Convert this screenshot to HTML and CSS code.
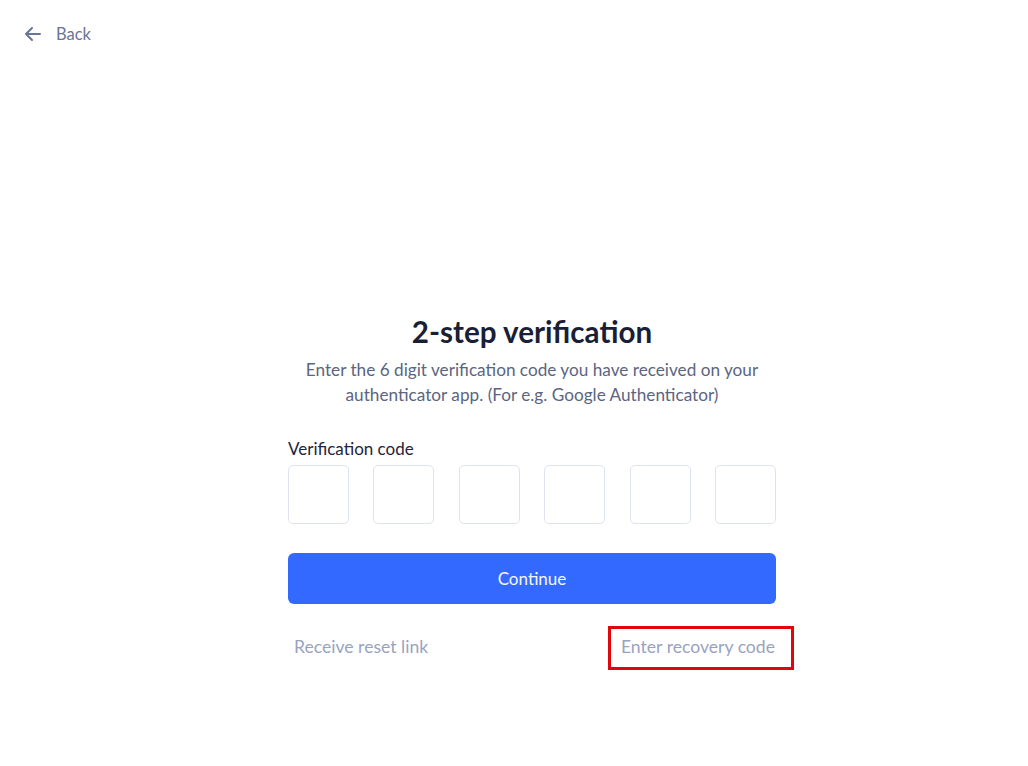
FILE: index.html
```html
<!DOCTYPE html>
<html>
<head>
<meta charset="utf-8">
<link rel="stylesheet" href="styles.css">
</head>
<body>
<div class="page">
  <a class="back" href="#">
    <svg width="18" height="16" viewBox="0 0 18 16" fill="none" stroke="#6b7594" stroke-width="2" stroke-linecap="round" stroke-linejoin="round"><path d="M16 8H2M8 2L2 8l6 6"/></svg>
    <span>Back</span>
  </a>
  <main class="main">
    <div class="card">
      <h1 class="title">2-step verification</h1>
      <p class="desc">Enter the 6 digit verification code you have received on your authenticator app. (For e.g. Google Authenticator)</p>
      <div class="label">Verification code</div>
      <div class="codes">
        <div class="box"></div><div class="box"></div><div class="box"></div>
        <div class="box"></div><div class="box"></div><div class="box"></div>
      </div>
      <button class="btn">Continue</button>
      <div class="links">
        <a class="link" href="#">Receive reset link</a>
        <a class="link recovery" href="#">Enter recovery code</a>
      </div>
    </div>
  </main>
</div>
</body>
</html>
```
FILE: styles.css
```css
* { box-sizing: border-box; }
html, body { margin: 0; padding: 0; background: #fff; }
body { font-family: Lato, "Noto Sans", sans-serif; width: 1028px; height: 766px; overflow: hidden; }
.page { padding: 24px 0 0 24px; }
.back { display: inline-flex; align-items: center; gap: 14px; color: #6b7594; text-decoration: none; font-size: 16.5px; line-height: 20px; }
.back svg { display: block; }
.main { padding-left: 12px; margin-top: 270px; display: flex; justify-content: center; }
.card { width: 488px; }
.title { margin: 0; text-align: center; font-size: 29.6px; font-weight: 700; color: #1a1f36; line-height: 34px; }
.desc { margin: 8px 0 0; text-align: center; color: #5b6580; font-size: 17.2px; line-height: 25px; }
.label { margin-top: 32px; font-size: 17px; color: #1f2439; line-height: 20px; }
.codes { margin-top: 6px; display: flex; justify-content: space-between; }
.box { width: 61px; height: 59px; border: 1.5px solid #dfe3f1; border-radius: 5px; }
.btn { margin-top: 29px; width: 100%; height: 51px; border: none; border-radius: 6px; background: #3369ff; color: #f4f6ff; font-family: inherit; font-size: 17px; }
.links { margin-top: 33px; display: flex; justify-content: space-between; }
.link { color: #99a3bf; text-decoration: none; font-size: 17.6px; line-height: 20px; padding: 0 1px 0 6px; }
.recovery { position: relative; }
.recovery::after { content: ""; position: absolute; left: -7px; right: -18px; top: -11px; bottom: -13px; border: 3px solid #e0060e; }
```
